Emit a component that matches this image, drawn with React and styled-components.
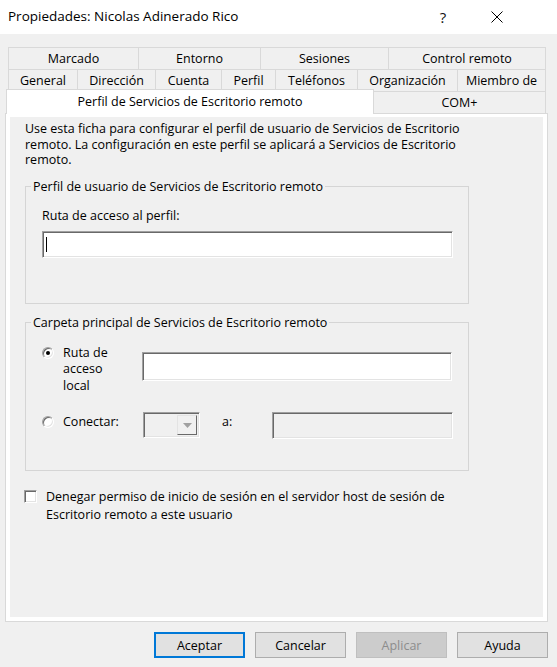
import React from 'react'
import styled, { createGlobalStyle } from 'styled-components'

const GlobalStyle = createGlobalStyle`
  html, body { margin: 0; padding: 0; background: #f0f0f0; }
  body {
    font-family: "Open Sans", "Liberation Sans", Arial, sans-serif;
    font-size: 12.5px;
    color: #000;
  }
  * { box-sizing: border-box; }
`

const row1 = [
  { label: 'Marcado', w: 131 },
  { label: 'Entorno', w: 123 },
  { label: 'Sesiones', w: 129 },
  { label: 'Control remoto', w: 158 },
]

const row2 = [
  { label: 'General', w: 70 },
  { label: 'Dirección', w: 79 },
  { label: 'Cuenta', w: 67 },
  { label: 'Perfil', w: 55 },
  { label: 'Teléfonos', w: 83 },
  { label: 'Organización', w: 101 },
  { label: 'Miembro de', w: 89 },
]

const App = () => {
  return (
    <Window>
      <GlobalStyle />
      <TitleBar>
        <Title>Propiedades: Nicolas Adinerado Rico</Title>
        <CaptionBtn>?</CaptionBtn>
        <CaptionBtn>
          <svg width="12" height="12" viewBox="0 0 12 12">
            <path d="M0.5 0.5 L11.5 11.5 M11.5 0.5 L0.5 11.5" stroke="#000" strokeWidth="1" fill="none" />
          </svg>
        </CaptionBtn>
      </TitleBar>

      <TabStrip>
        <TabRow>
          {row1.map((t) => (
            <Tab key={t.label} $w={t.w}>{t.label}</Tab>
          ))}
        </TabRow>
        <TabRow>
          {row2.map((t) => (
            <Tab key={t.label} $w={t.w}>{t.label}</Tab>
          ))}
        </TabRow>
        <FrontRow>
          <ActiveTab>Perfil de Servicios de Escritorio remoto</ActiveTab>
          <Tab $w={173}>COM+</Tab>
        </FrontRow>
      </TabStrip>

      <Panel>
        <PanelInner>
          <Intro>
            Use esta ficha para configurar el perfil de usuario de Servicios de Escritorio
            remoto. La configuración en este perfil se aplicará a Servicios de Escritorio
            remoto.
          </Intro>

          <Group $pb={45} $mt={11}>
            <Legend>Perfil de usuario de Servicios de Escritorio remoto</Legend>
            <FieldLabel>Ruta de acceso al perfil:</FieldLabel>
            <TextBox $w={411} $h={27} $mt={7}>
              <Caret />
            </TextBox>
          </Group>

          <Group $pb={31} $mt={11}>
            <Legend>Carpeta principal de Servicios de Escritorio remoto</Legend>
            <OptionRow $mt={14}>
              <Radio $mt={2}><RadioDot /></Radio>
              <OptionLabel>Ruta de<br />acceso<br />local</OptionLabel>
              <TextBox $w={310} $h={29} $mt={7} />
            </OptionRow>
            <OptionRow $mt={18}>
              <Radio $mt={4} />
              <OptionLabel $mt={2}>Conectar:</OptionLabel>
              <Combo>
                <ComboArrow>
                  <svg width="9" height="5" viewBox="0 0 9 5">
                    <path d="M0 0 H9 L4.5 5 Z" fill="#a0a0a0" />
                  </svg>
                </ComboArrow>
              </Combo>
              <ToLabel>a:</ToLabel>
              <TextBox $w={181} $h={27} $mt={0} $disabled />
            </OptionRow>
          </Group>

          <CheckRow>
            <CheckBox />
            <CheckText>
              Denegar permiso de inicio de sesión en el servidor host de sesión de
              Escritorio remoto a este usuario
            </CheckText>
          </CheckRow>
        </PanelInner>
      </Panel>

      <ButtonBar>
        <Button $default>Aceptar</Button>
        <Button>Cancelar</Button>
        <Button disabled>Aplicar</Button>
        <Button>Ayuda</Button>
      </ButtonBar>
    </Window>
  )
}

export default App

const Window = styled.div`
  width: 557px;
  height: 667px;
  background: #f0f0f0;
  display: flex;
  flex-direction: column;
  overflow: hidden;
`
const TitleBar = styled.div`
  height: 34px;
  flex-shrink: 0;
  background: #fff;
  display: flex;
  align-items: center;
  padding-left: 8px;
  padding-right: 33px;
`
const Title = styled.div`
  flex: 1;
  font-size: 13.5px;
  color: #000;
  padding-bottom: 2px;
`
const CaptionBtn = styled.div`
  width: 54px;
  height: 34px;
  display: flex;
  align-items: center;
  justify-content: center;
  font-size: 15px;
  color: #111;
`
const TabStrip = styled.div`
  margin-top: 13px;
  padding-left: 8px;
  display: flex;
  flex-direction: column;
`
const TabRow = styled.div`
  display: flex;
  & + & {
    margin-top: -1px;
  }
`
const Tab = styled.div`
  width: ${(p) => p.$w}px;
  height: 23px;
  border: 1px solid #d9d9d9;
  background: #f0f0f0;
  text-align: center;
  line-height: 22px;
  white-space: nowrap;
  overflow: hidden;
  & + & {
    margin-left: -1px;
  }
`
const FrontRow = styled.div`
  display: flex;
  align-items: flex-end;
  margin-top: -3px;
  margin-bottom: -1px;
  position: relative;
  z-index: 1;
`
const ActiveTab = styled.div`
  width: 368px;
  height: 25px;
  margin-left: -2px;
  margin-right: -1px;
  border: 1px solid #d9d9d9;
  border-bottom: none;
  background: #fff;
  text-align: center;
  line-height: 23px;
  white-space: nowrap;
`
const Panel = styled.div`
  margin-left: 5px;
  width: 543px;
  height: 509px;
  border: 1px solid #d9d9d9;
  background: #fff;
  padding: 3px 4px 4px 4px;
  flex-shrink: 0;
`
const PanelInner = styled.div`
  height: 100%;
  background: #f0f0f0;
  padding: 4px 0 0 15px;
`
const Intro = styled.p`
  margin: 0;
  width: 470px;
  line-height: 15.5px;
`
const Group = styled.fieldset`
  margin: ${(p) => p.$mt ?? 11}px 0 0 0;
  width: 444px;
  border: 1px solid #d5d5d5;
  padding: 0 16px ${(p) => p.$pb}px 16px;
  min-inline-size: 0;
`
const Legend = styled.legend`
  margin-left: -11px;
  padding: 0 2px;
  line-height: 16px;
`
const FieldLabel = styled.div`
  margin-top: 13px;
  line-height: 16px;
`
const TextBox = styled.div`
  width: ${(p) => p.$w}px;
  height: ${(p) => p.$h}px;
  margin-top: ${(p) => p.$mt ?? 8}px;
  background: ${(p) => (p.$disabled ? '#f0f0f0' : '#fff')};
  border: 1px solid;
  border-color: #a0a0a0 #fff #fff #a0a0a0;
  box-shadow: inset 1px 1px 0 #696969, inset -1px -1px 0 #e3e3e3;
  display: flex;
  align-items: center;
  padding-left: 3px;
  flex-shrink: 0;
`
const Caret = styled.span`
  width: 1px;
  height: 15px;
  background: #000;
`
const OptionRow = styled.div`
  display: flex;
  align-items: flex-start;
  margin-top: ${(p) => p.$mt}px;
`
const Radio = styled.div`
  width: 12px;
  height: 12px;
  margin-top: ${(p) => p.$mt}px;
  border-radius: 50%;
  background: #fff;
  border: 1px solid;
  border-color: #a0a0a0 #fff #fff #a0a0a0;
  box-shadow: inset 1px 1px 0 #696969, inset -1px -1px 0 #e3e3e3;
  display: flex;
  align-items: center;
  justify-content: center;
  flex-shrink: 0;
`
const RadioDot = styled.span`
  width: 4px;
  height: 4px;
  border-radius: 50%;
  background: #000;
`
const OptionLabel = styled.div`
  width: 79px;
  margin-left: 9px;
  margin-top: ${(p) => p.$mt ?? 0}px;
  line-height: 16.5px;
  flex-shrink: 0;
`
const Combo = styled.div`
  width: 57px;
  height: 26px;
  margin-left: 1px;
  background: #f0f0f0;
  border: 1px solid;
  border-color: #a0a0a0 #fff #fff #a0a0a0;
  box-shadow: inset 1px 1px 0 #696969, inset -1px -1px 0 #e3e3e3;
  display: flex;
  justify-content: flex-end;
  padding: 2px;
  flex-shrink: 0;
`
const ComboArrow = styled.div`
  width: 20px;
  height: 100%;
  background: #f0f0f0;
  border: 1px solid;
  border-color: #e3e3e3 #696969 #696969 #e3e3e3;
  display: flex;
  align-items: center;
  justify-content: center;
`
const ToLabel = styled.div`
  width: 50px;
  margin-left: 22px;
  margin-top: 2px;
  line-height: 16.5px;
  flex-shrink: 0;
`
const CheckRow = styled.div`
  display: flex;
  align-items: flex-start;
  margin-top: 17px;
  margin-left: -1px;
`
const CheckBox = styled.div`
  width: 13px;
  height: 13px;
  margin-top: 2px;
  background: #fff;
  border: 1px solid;
  border-color: #a0a0a0 #fff #fff #a0a0a0;
  box-shadow: inset 1px 1px 0 #696969, inset -1px -1px 0 #e3e3e3;
  flex-shrink: 0;
`
const CheckText = styled.div`
  width: 430px;
  margin-left: 9px;
  line-height: 18px;
`
const ButtonBar = styled.div`
  display: flex;
  justify-content: flex-end;
  gap: 10px;
  padding-right: 9px;
  margin-top: 10px;
`
const Button = styled.button`
  width: 91px;
  height: 26px;
  font-family: inherit;
  font-size: 12.5px;
  color: ${(p) => (p.disabled ? '#8c8c8c' : '#000')};
  background: ${(p) => (p.disabled ? '#cccccc' : '#e1e1e1')};
  border: ${(p) => (p.$default ? '2px solid #0078d7' : p.disabled ? '1px solid #bfbfbf' : '1px solid #adadad')};
  padding: 0;
`
